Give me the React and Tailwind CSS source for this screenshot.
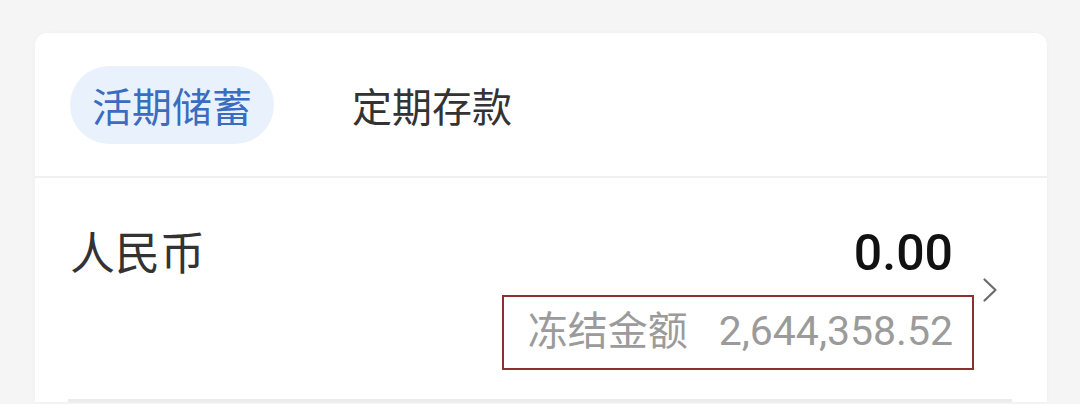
import React from 'react';

const cjk = "font-['Noto_Sans_CJK_SC',sans-serif]";
const num = "font-['Roboto','Noto_Sans_CJK_SC',sans-serif]";

function ChevronRight() {
  return (
    <svg width="16" height="26" viewBox="0 0 16 26" fill="none" className="mt-[49px] ml-[29px] shrink-0">
      <path d="M2.5 2.5 L13.5 13 L2.5 23.5" stroke="#6b6b6b" strokeWidth="2.2" strokeLinecap="round" strokeLinejoin="round" />
    </svg>
  );
}

function SavingsTabs({ active = 'current' }) {
  return (
    <div className="flex h-[145px] items-center border-b-2 border-[#f0f0f0] pl-[35px]">
      <button
        type="button"
        className={`flex h-[78px] items-center rounded-full px-[22px] text-[40px] leading-none ${cjk} ${
          active === 'current' ? 'bg-[#e9f2fc] text-[#3a6cc0]' : 'text-[#333]'
        }`}
      >
        活期储蓄
      </button>
      <button
        type="button"
        className={`ml-[78px] flex h-[78px] items-center text-[40px] leading-none text-[#333] ${cjk}`}
      >
        定期存款
      </button>
    </div>
  );
}

function BalanceRow({ currency, balance, frozen }) {
  return (
    <div className="flex h-[221px] items-start pl-[35px] pr-[49px] pt-[50px]">
      <p className={`flex-1 text-[45px] leading-none text-[#333] ${cjk}`}>{currency}</p>

      <div className="flex flex-col items-end">
        <p className={`text-[50px] font-medium leading-none text-[#111] ${num}`}>{balance}</p>
        <div className="relative mt-[30px] flex items-baseline">
          <span className={`text-[40px] leading-[40px] text-[#9b9b9b] ${cjk}`}>冻结金额</span>
          <span className={`ml-[31px] text-[41px] leading-[40px] text-[#9b9b9b] ${num}`}>
            {frozen}
          </span>
          {/* annotation frame drawn over the frozen amount */}
          <span className="pointer-events-none absolute -top-[13px] -bottom-[19px] -left-[26px] -right-[21px] border-2 border-[#8c2f2f]" />
        </div>
      </div>

      <ChevronRight />
    </div>
  );
}

export default function App() {
  return (
    <div className="h-[404px] w-[1080px] overflow-hidden bg-[#f5f5f5] pt-[33px]">
      <section className="ml-[35px] w-[1012px] rounded-t-[12px] bg-white shadow-[0_0_4px_rgba(0,0,0,0.03)]">
        <SavingsTabs active="current" />
        <BalanceRow currency="人民币" balance="0.00" frozen="2,644,358.52" />
        <div className="ml-[33px] mr-[35px] h-[3px] bg-[#ececec]" />
      </section>
    </div>
  );
}
